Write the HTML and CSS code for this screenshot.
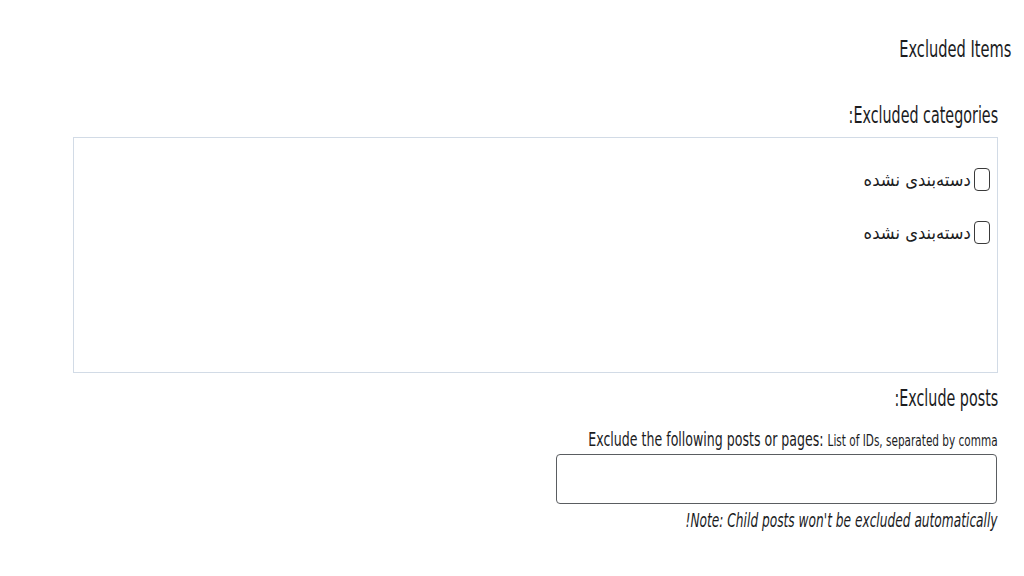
FILE: index.html
```html
<!DOCTYPE html>
<html lang="fa" dir="rtl">
<head>
    <meta charset="utf-8">
    <title>Excluded Items</title>
    <link rel="stylesheet" href="styles.css">
</head>
<body>
    <div class="wrap">
        <h2 class="title"><span class="sq">Excluded Items</span></h2>

        <h3 class="label"><span class="sq">Excluded categories:</span></h3>
        <div class="cats">
            <label class="cat"><span class="box"></span><span class="cat-name">دسته‌بندی نشده</span></label>
            <label class="cat"><span class="box"></span><span class="cat-name">دسته‌بندی نشده</span></label>
        </div>

        <h3 class="label label-posts"><span class="sq">Exclude posts:</span></h3>
        <p class="desc"><span class="sq">Exclude the following posts or pages: <small>List of IDs, separated by comma</small></span></p>
        <div class="field"></div>
        <p class="note"><span class="sq">Note: Child posts won't be excluded automatically!</span></p>
    </div>
</body>
</html>
```

FILE: styles.css
```css
body {
    margin: 0;
    background: #fff;
    color: #1b1c1e;
    font-family: "DejaVu Sans", Verdana, sans-serif;
}
.wrap {
    display: flex;
    flex-direction: column;
    align-items: stretch;
}
/* screenshot text is squeezed horizontally */
.sq {
    display: inline-block;
    white-space: nowrap;
    transform: scaleX(.636);
    transform-origin: 100% 50%;
}
.title {
    margin: 35px 13px 0 0;
    font-size: 23px;
    line-height: 28px;
    font-weight: normal;
}
.label {
    margin: 40px 26px 0 0;
    font-size: 22.5px;
    line-height: 24px;
    font-weight: normal;
}
.label-posts { margin-top: 13px; }
.cats {
    box-sizing: border-box;
    height: 236px;
    margin: 10px 26px 0 73px;
    padding: 29px 7px 0 0;
    border: 1px solid #d2dbe6;
    display: flex;
    flex-direction: column;
    gap: 29px;
}
.cat {
    display: flex;
    align-items: center;
    gap: 3px;
    height: 24px;
}
.box {
    box-sizing: border-box;
    width: 16px;
    height: 23px;
    border: 1px solid #3a3a3a;
    border-radius: 4px;
}
.cat-name {
    font-size: 18px;
    display: inline-block;
    transform: scaleX(.91);
    transform-origin: 100% 50%;
}
.desc {
    margin: 19px 26px 0 0;
    font-size: 19.8px;
    line-height: 22px;
}
.desc small { font-size: 16.5px; }
.field {
    box-sizing: border-box;
    width: 441px;
    height: 50px;
    margin: 2px 27px 0 0;
    border: 1px solid #5a5d61;
    border-radius: 4px;
}
.note {
    margin: 6px 26px 0 0;
    font-size: 19.2px;
    line-height: 22px;
    font-style: italic;
}
```
